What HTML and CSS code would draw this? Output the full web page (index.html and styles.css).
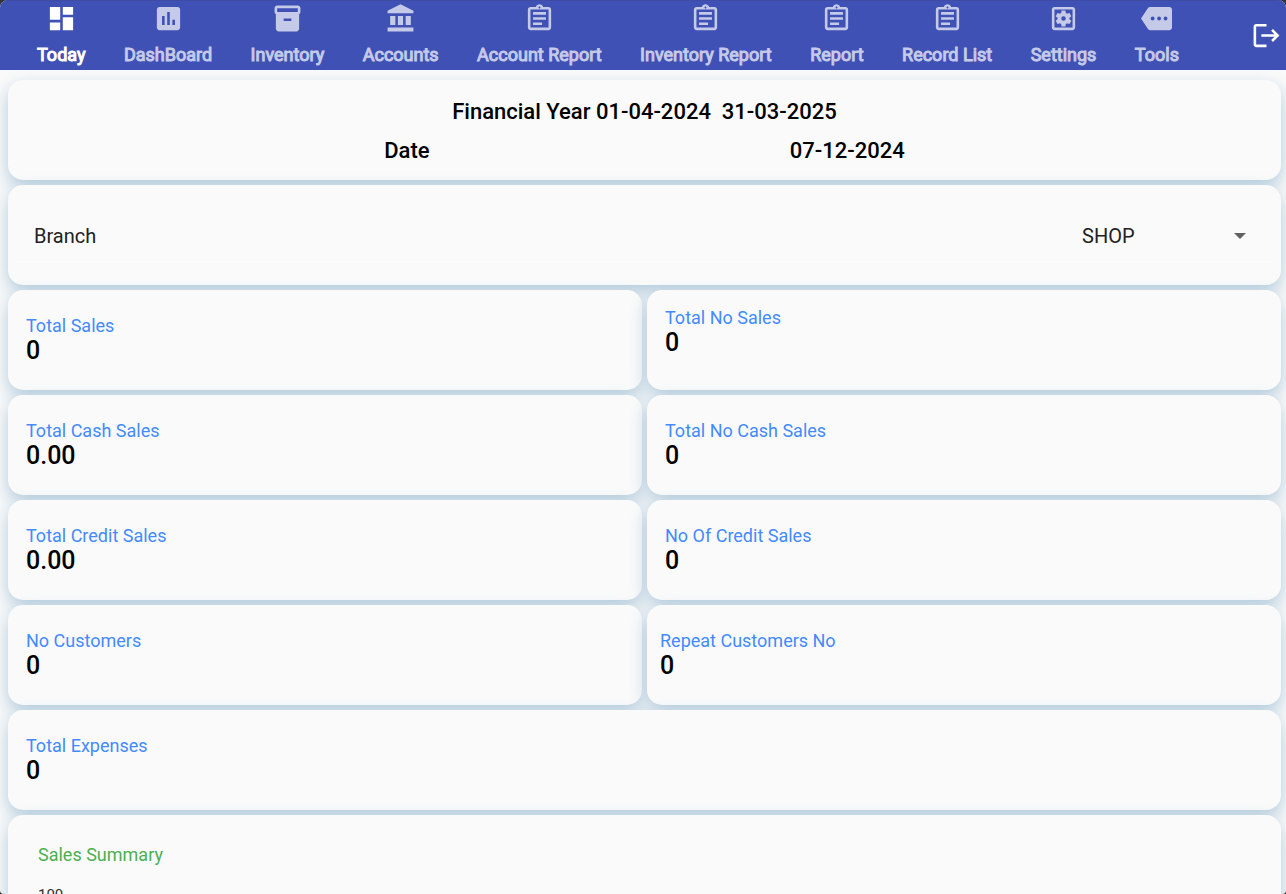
FILE: index.html
```html
<!DOCTYPE html>
<html lang="en">
<head>
<meta charset="utf-8">
<meta name="viewport" content="width=device-width, initial-scale=1">
<title>Today</title>
<link rel="stylesheet" href="styles.css">
</head>
<body>
<svg class="sprite" aria-hidden="true">
  <symbol id="assignment" viewBox="0 0 24 24">
    <path d="M7 15h7v2H7zm0-4h10v2H7zm0-4h10v2H7z"/>
    <path d="M19 3h-4.180C14.400 1.840 13.300 1 12 1c-1.300 0-2.400.840-2.820 2H5c-1.100 0-2 .9-2 2v14c0 1.100.9 2 2 2h14c1.100 0 2-.9 2-2V5c0-1.100-.9-2-2-2zm-7-.25c.41 0 .75.34.75.75s-.34.75-.75.75-.75-.34-.75-.75.34-.75.75-.75zM19 19H5V5h14v14z"/>
  </symbol>
</svg>
<div class="app">
  <header class="topbar">
    <nav class="tabs">
      <a class="tab active" href="#today" aria-current="page"><svg class="icon" viewBox="0 0 24 24"><path d="M3 13h8V3H3v10zm0 8h8v-6H3v6zm10 0h8V11h-8v10zm0-18v6h8V3h-8z"/></svg><span>Today</span></a>
      <a class="tab" href="#dashboard"><svg class="icon" viewBox="0 0 24 24"><path d="M19 3H5c-1.100 0-2 .9-2 2v14c0 1.100.9 2 2 2h14c1.100 0 2-.9 2-2V5c0-1.100-.9-2-2-2zM9 17H7v-7h2v7zm4 0h-2V7h2v10zm4 0h-2v-4h2v4z"/></svg><span>DashBoard</span></a>
      <a class="tab" href="#inventory"><svg class="icon" viewBox="0 0 24 24"><path d="M20 2H4c-1 0-2 .9-2 2v3.010c0 .72.43 1.340 1 1.690V20c0 1.100 1.100 2 2 2h14c.9 0 2-.9 2-2V8.700c.57-.35 1-.97 1-1.690V4c0-1.100-1-2-2-2zm-5 12H9v-2h6v2zm5-7H4V4h16v3z"/></svg><span>Inventory</span></a>
      <a class="tab" href="#accounts"><svg class="icon" viewBox="0 0 24 24"><path d="M4 10h4v7H4zM10 10h4v7h-4zM2 19h20v3H2zM16 10h4v7h-4zM12 1L2 6v2h20V6z"/></svg><span>Accounts</span></a>
      <a class="tab" href="#account-report"><svg class="icon"><use href="#assignment"/></svg><span>Account Report</span></a>
      <a class="tab" href="#inventory-report"><svg class="icon"><use href="#assignment"/></svg><span>Inventory Report</span></a>
      <a class="tab" href="#report"><svg class="icon"><use href="#assignment"/></svg><span>Report</span></a>
      <a class="tab" href="#record-list"><svg class="icon"><use href="#assignment"/></svg><span>Record List</span></a>
      <a class="tab" href="#settings"><svg class="icon" viewBox="0 0 24 24"><path fill-rule="evenodd" d="M19 3H5c-1.100 0-2 .9-2 2v14c0 1.100.9 2 2 2h14c1.100 0 2-.9 2-2V5c0-1.100-.9-2-2-2zm0 16H5V5h14v14z"/><path fill-rule="evenodd" transform="translate(12 12) scale(.88) translate(-12 -12)" d="M12 10a2 2 0 1 0 0 4 2 2 0 0 0 0-4zM17.250 12c0 .23-.02.46-.05.68l1.480 1.160c.13.11.17.3.08.45l-1.400 2.420c-.09.15-.27.21-.43.15l-1.740-.7c-.36.28-.76.51-1.180.69l-.26 1.850c-.03.17-.18.3-.35.3h-2.800c-.17 0-.32-.13-.35-.29l-.26-1.850c-.43-.18-.82-.41-1.180-.69l-1.740.7c-.16.06-.34 0-.43-.15l-1.400-2.420c-.09-.15-.05-.34.08-.45l1.480-1.160c-.03-.23-.05-.46-.05-.69 0-.23.02-.46.05-.68l-1.480-1.160c-.13-.11-.17-.3-.08-.45l1.400-2.420c.09-.15.27-.21.43-.15l1.740.7c.36-.28.76-.51 1.180-.69l.26-1.850c.03-.17.18-.3.35-.3h2.800c.17 0 .32.13.35.29l.26 1.850c.43.18.82.41 1.180.69l1.740-.7c.16-.06.34 0 .43.15l1.400 2.420c.09.15.05.34-.08.45l-1.480 1.160c.03.23.05.46.05.69z"/></svg><span>Settings</span></a>
      <a class="tab" href="#tools"><svg class="icon" viewBox="0 0 24 24"><path fill-rule="evenodd" d="M22 3H7c-.69 0-1.230.35-1.590.88L0 12l5.410 8.110c.36.53.97.89 1.660.89H22c1.100 0 2-.9 2-2V5c0-1.100-.9-2-2-2zM9 10.500a1.500 1.500 0 1 1 0 3 1.500 1.500 0 0 1 0-3zM14 10.500a1.500 1.500 0 1 1 0 3 1.500 1.500 0 0 1 0-3zM19 10.500a1.500 1.500 0 1 1 0 3 1.500 1.500 0 0 1 0-3z"/></svg><span>Tools</span></a>
    </nav>
    <button class="logout" type="button" aria-label="Log out"><svg class="icon" viewBox="0 0 24 24"><path d="M17 7l-1.410 1.410L18.170 11H8v2h10.170l-2.580 2.580L17 17l5-5zM4 5h8V3H4c-1.100 0-2 .9-2 2v14c0 1.100.9 2 2 2h8v-2H4V5z"/></svg></button>
  </header>

  <main class="content">
    <section class="card wide period">
      <h1 class="heading year">Financial Year 01-04-2024&nbsp; 31-03-2025</h1>
      <div class="date-row"><span class="heading">Date</span><span class="heading">07-12-2024</span></div>
    </section>

    <section class="card wide branch">
      <div class="branch-row">
        <label for="branch">Branch</label>
        <div class="picker">
          <select id="branch"><option>SHOP</option></select>
          <svg class="caret" viewBox="0 0 12 6" aria-hidden="true"><path d="M0 0h12L6 6z"/></svg>
        </div>
      </div>
    </section>

    <section class="card stat"><h2 class="label">Total Sales</h2><p class="value">0</p></section>
    <section class="card stat raised"><h2 class="label">Total No Sales</h2><p class="value">0</p></section>
    <section class="card stat"><h2 class="label">Total Cash Sales</h2><p class="value">0.00</p></section>
    <section class="card stat"><h2 class="label">Total No Cash Sales</h2><p class="value">0</p></section>
    <section class="card stat"><h2 class="label">Total Credit Sales</h2><p class="value">0.00</p></section>
    <section class="card stat"><h2 class="label">No Of Credit Sales</h2><p class="value">0</p></section>
    <section class="card stat"><h2 class="label">No Customers</h2><p class="value">0</p></section>
    <section class="card stat narrow"><h2 class="label">Repeat Customers No</h2><p class="value">0</p></section>
    <section class="card stat wide"><h2 class="label">Total Expenses</h2><p class="value">0</p></section>

    <section class="card wide summary">
      <h2 class="label green">Sales Summary</h2>
      <p class="axis">100</p>
    </section>
  </main>
</div>
</body>
</html>
```
FILE: styles.css
```css
* { box-sizing: border-box; }

body {
  margin: 0;
  background: #333;
  color: #000;
  font-family: Roboto, "Liberation Sans", sans-serif;
}

h1, h2, p { margin: 0; font-weight: 400; }

.sprite { display: none; }

.app {
  display: flex;
  flex-direction: column;
  height: 100vh;
  overflow: hidden;
  border-radius: 8px 8px 4px 4px;
  background: #fafafa;
}

/* Top bar */
.topbar {
  display: flex;
  align-items: center;
  gap: 53px;
  flex: none;
  height: 70px;
  padding: 0 4px 0 18px;
  background: #3f51b5;
  box-shadow: inset 0 1px #3f4ba4;
}

.tabs {
  display: flex;
  flex: 1;
  justify-content: space-between;
}

.tab {
  display: flex;
  flex-direction: column;
  align-items: center;
  gap: 10px;
  padding: 0 19px 2px;
  color: #c5cae9;
  font-size: 18px;
  line-height: 22px;
  text-decoration: none;
  white-space: nowrap;
  -webkit-text-stroke: 1px currentColor;
}

.tab.active { color: #fff; }

.icon {
  display: block;
  width: 31px;
  height: 31px;
  fill: currentColor;
}

.logout {
  padding: 0;
  border: 0;
  background: none;
  color: #fff;
}

/* Cards */
.content {
  display: grid;
  grid-template-columns: 1fr 1fr;
  grid-auto-rows: 100px;
  gap: 5px;
  flex: 1;
  min-height: 0;
  padding: 10px 5px 0 8px;
  overflow: hidden;
}

.card {
  border-radius: 15px;
  background: #fafafa;
  box-shadow: 0 7px 18px #b0c9db;
}

.wide { grid-column: 1 / -1; }

.period { padding-top: 17px; }

.heading {
  font-size: 22px;
  font-weight: 500;
  line-height: 30px;
}

.year { text-align: center; }

.date-row {
  display: flex;
  justify-content: space-evenly;
  margin-top: 9px;
  padding: 0 16px;
}

.branch { padding: 26px 6px 0; }

.branch-row {
  display: flex;
  align-items: center;
  justify-content: space-between;
  height: 51px;
  padding: 0 29px 0 20px;
  border-bottom: 1px solid #fdfdfd;
  color: #212121;
  font-size: 20px;
}

.picker { display: flex; align-items: center; }

.picker select {
  width: 152px;
  padding: 0;
  border: 0;
  appearance: none;
  background: none;
  color: inherit;
  font: inherit;
}

.caret { width: 12px; height: 6px; fill: #616161; }

.stat {
  display: flex;
  flex-direction: column;
  justify-content: center;
  padding: 0 18px;
}

.raised { padding-bottom: 16px; }
.narrow { padding-left: 13px; }

.label {
  color: #448aff;
  font-size: 18px;
  line-height: 22px;
}

.green { color: #4caf50; }

.value {
  font-size: 25px;
  font-weight: 500;
  line-height: 28px;
}

.summary { padding: 29px 30px; }

.axis {
  margin-top: 20px;
  color: #333;
  font-size: 15px;
  line-height: 18px;
}
```
